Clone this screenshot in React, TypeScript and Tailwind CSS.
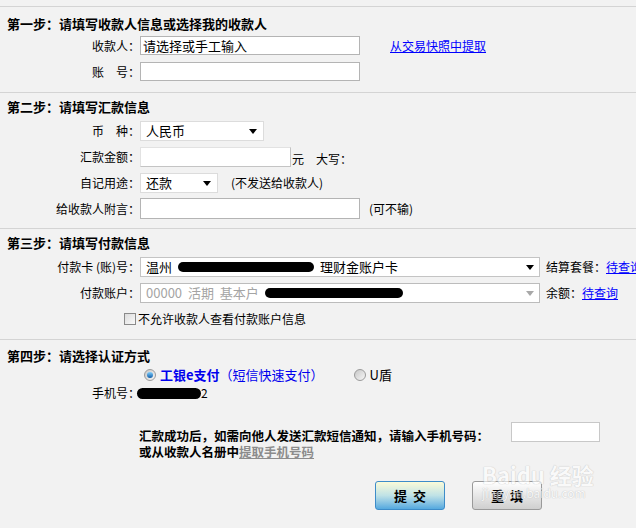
import type { ReactNode } from 'react';

const font = { fontFamily: '"Noto Sans CJK SC", "Liberation Sans", sans-serif' };

function Label({ children }: { children: ReactNode }) {
  return <span className="w-[140px] shrink-0 text-right text-[12px] leading-[16px] text-black">{children}</span>;
}

function Row({ label, children, className = '' }: { label: ReactNode; children: ReactNode; className?: string }) {
  return (
    <div className={`flex items-center ${className}`}>
      <Label>{label}</Label>
      {children}
    </div>
  );
}

function Caret({ muted = false }: { muted?: boolean }) {
  return (
    <svg width="8" height="5" viewBox="0 0 8 5" className="shrink-0">
      <path d="M0 0 H8 L4 5 Z" fill={muted ? '#a8a8a8' : '#000'} />
    </svg>
  );
}

function StepTitle({ children, className = '' }: { children: ReactNode; className?: string }) {
  return <p className={`pl-[7px] text-[13px] font-bold leading-[16px] text-black ${className}`}>{children}</p>;
}

function Blob({ className }: { className: string }) {
  return <span className={`inline-block shrink-0 rounded-full bg-black ${className}`} />;
}

function Radio({ checked }: { checked?: boolean }) {
  return (
    <span className="flex h-[12px] w-[12px] shrink-0 items-center justify-center rounded-full border border-[#9a9a9a] bg-gradient-to-br from-[#c8c8c8] to-[#f6f6f6]">
      {checked ? (
        <span className="h-[6px] w-[6px] rounded-full bg-gradient-to-b from-[#7fd0ff] to-[#0a5ea8]" />
      ) : null}
    </span>
  );
}

export default function App() {
  return (
    <div className="relative h-[528px] w-[636px] overflow-hidden bg-[#f2f2f2]" style={font}>
      <div className="h-[6px]" />

      <section className="border-t border-[#d4d4d4] pb-[11px]">
        <StepTitle className="pt-[9px]">第一步：请填写收款人信息或选择我的收款人</StepTitle>
        <Row label="收款人：" className="mt-[4px]">
          <div className="flex h-[19px] w-[220px] shrink-0 items-center border border-[#b4b4b4] bg-white pl-[2px] text-[13px] text-black">
            请选择或手工输入
          </div>
          <a className="ml-[30px] text-[12px] text-[#0000ff] underline">从交易快照中提取</a>
        </Row>
        <Row label="账　号：" className="mt-[7px]">
          <div className="h-[19px] w-[220px] shrink-0 border border-[#b4b4b4] bg-white" />
        </Row>
      </section>

      <section className="border-t border-[#d4d4d4] pb-[9px]">
        <StepTitle className="pt-[6px]">第二步：请填写汇款信息</StepTitle>
        <Row label="币　种：" className="mt-[6px]">
          <div className="flex h-[20px] w-[124px] shrink-0 items-center justify-between border border-[#dcdcdc] bg-white pl-[5px] pr-[6px] text-[13px] text-black">
            <span>人民币</span>
            <Caret />
          </div>
        </Row>
        <Row label="汇款金额：" className="mt-[6px]">
          <div className="h-[20px] w-[151px] shrink-0 border border-[#e2e2e2] border-b-[#c4c4c4] border-r-[#c4c4c4] bg-white" />
          <span className="ml-[1px] self-end text-[12px] leading-[16px] text-black">元</span>
          <span className="ml-[12px] self-end text-[12px] leading-[16px] text-black">大写：</span>
        </Row>
        <Row label="自记用途：" className="mt-[6px]">
          <div className="flex h-[20px] w-[78px] shrink-0 items-center justify-between border border-[#dcdcdc] bg-white pl-[5px] pr-[6px] text-[13px] text-black">
            <span>还款</span>
            <Caret />
          </div>
          <span className="ml-[13px] text-[12px] text-black">(不发送给收款人)</span>
        </Row>
        <Row label="给收款人附言：" className="mt-[5px]">
          <div className="h-[21px] w-[220px] shrink-0 border border-[#b4b4b4] bg-white" />
          <span className="ml-[9px] text-[12px] text-black">(可不输)</span>
        </Row>
      </section>

      <section className="border-t border-[#d4d4d4] pb-[13px]">
        <StepTitle className="pt-[6px]">第三步：请填写付款信息</StepTitle>
        <Row label="付款卡 (账)号：" className="mt-[6px]">
          <div className="flex h-[20px] w-[400px] shrink-0 items-center border border-[#c4c4c4] bg-white pl-[5px] pr-[5px] text-[13px] text-black">
            <span>温州</span>
            <Blob className="ml-[6px] h-[10px] w-[136px]" />
            <span className="ml-[6px]">理财金账户卡</span>
            <span className="flex-1" />
            <Caret />
          </div>
          <span className="ml-[6px] shrink-0 whitespace-nowrap text-[12px] text-black">
            结算套餐：<a className="text-[#0000ff] underline">待查询</a>
          </span>
        </Row>
        <Row label="付款账户：" className="mt-[6px]">
          <div className="flex h-[20px] w-[400px] shrink-0 items-center border border-[#bcbcbc] bg-white pl-[5px] pr-[5px] text-[13px] text-[#a4a4a4]">
            <span>00000&nbsp; 活期&nbsp; 基本户</span>
            <Blob className="ml-[6px] h-[10px] w-[138px]" />
            <span className="flex-1" />
            <Caret muted />
          </div>
          <span className="ml-[6px] shrink-0 whitespace-nowrap text-[12px] text-black">
            余额：<a className="text-[#0000ff] underline">待查询</a>
          </span>
        </Row>
        <div className="mt-[9px] flex h-[14px] items-center pl-[124px]">
          <span className="h-[12px] w-[12px] border border-[#8a8a8a] bg-gradient-to-br from-[#dcdcdc] to-[#fafafa]" />
          <span className="ml-[2px] text-[12px] text-black">不允许收款人查看付款账户信息</span>
        </div>
      </section>

      <section className="border-t border-[#d4d4d4]">
        <StepTitle className="pt-[8px]">第四步：请选择认证方式</StepTitle>
        <div className="mt-[3px] flex h-[16px] items-center pl-[144px]">
          <Radio checked />
          <span className="ml-[4px] text-[13px] font-bold text-[#0000ee]">工银e支付</span>
          <span className="text-[13px] text-[#0000ee]">（短信快速支付）</span>
          <span className="ml-[30px]" />
          <Radio />
          <span className="ml-[4px] text-[13px] text-black">U盾</span>
        </div>
        <Row label="手机号：" className="mt-[2px] h-[16px]">
          <Blob className="ml-[-3px] h-[11px] w-[64px]" />
          <span className="text-[12px] text-black">2</span>
        </Row>

        <div className="mt-[21px] pl-[139px] text-[12.5px] font-bold text-black">
          <div className="flex items-start">
            <span className="mt-[6px] leading-[16px]">汇款成功后，如需向他人发送汇款短信通知，请输入手机号码：</span>
            <div className="ml-[22px] h-[20px] w-[89px] shrink-0 border border-[#c8c8c8] bg-white" />
          </div>
          <p className="leading-[16px]">
            或从收款人名册中<a className="text-[#8c8c8c] underline">提取手机号码</a>
          </p>
        </div>

        <div className="mt-[21px] flex pl-[375px]">
          <button className="h-[29px] w-[70px] rounded-[3px] border border-[#3d8cc9] bg-gradient-to-b from-[#fbfbd8] via-[#bfe2e6] to-[#54a9df] pl-[6px] text-[13px] font-bold tracking-[6px] text-black">
            提交
          </button>
          <button className="ml-[27px] h-[29px] w-[70px] rounded-[3px] border border-[#9a9a9a] bg-gradient-to-b from-[#ffffff] to-[#cfcfcf] pl-[6px] text-[13px] font-bold tracking-[6px] text-black">
            重填
          </button>
        </div>
      </section>

      <div className="pointer-events-none absolute left-[482px] top-[462px] flex flex-col items-start text-white opacity-60" style={{ textShadow: '0 0 1px #b0b0b0, 0 0 1px #b0b0b0' }}>
        <span className="text-[22px] font-bold leading-[24px]">Baidu 经验</span>
        <span className="text-[12px] leading-[14px]">jingyan.baidu.com</span>
      </div>
    </div>
  );
}
